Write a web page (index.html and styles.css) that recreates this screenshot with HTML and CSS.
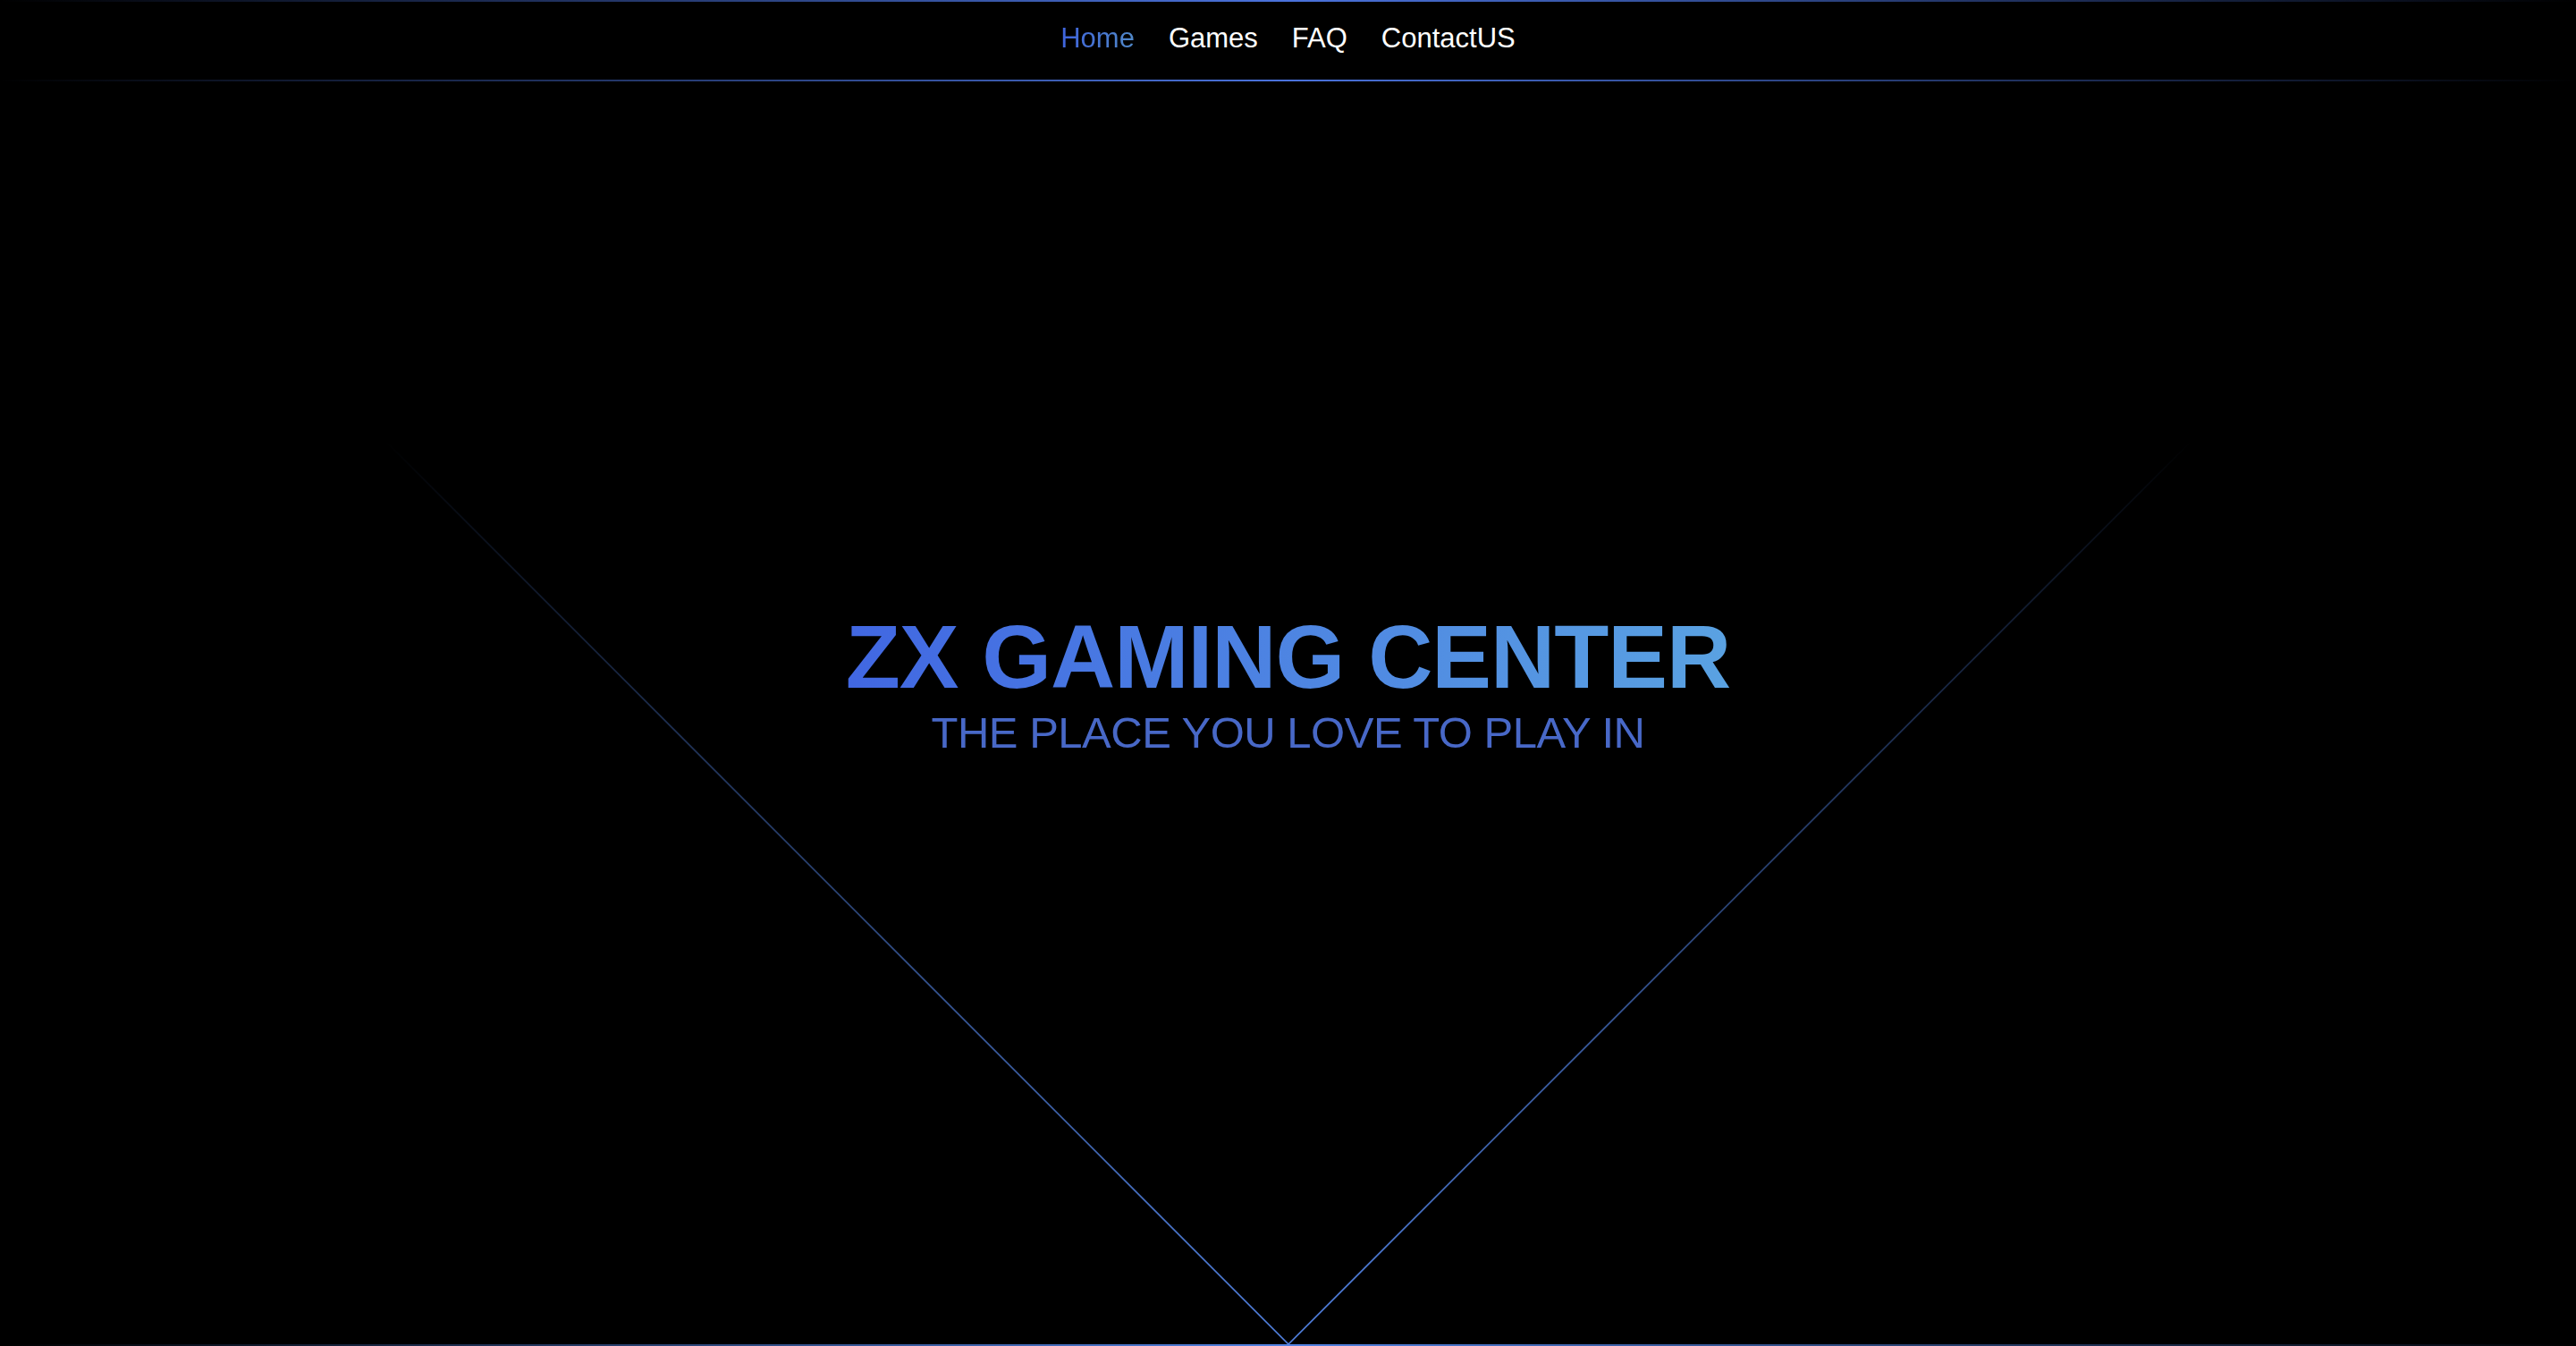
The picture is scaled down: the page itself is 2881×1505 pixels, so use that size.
FILE: index.html
```html
<!DOCTYPE html>
<html lang="en">
<head>
<meta charset="utf-8">
<title>ZX Gaming Center</title>
<link rel="stylesheet" href="styles.css">
</head>
<body>
<div class="page">
  <header class="top">
    <nav class="nav">
      <a class="nav-link active" href="#home">Home</a>
      <a class="nav-link" href="#games">Games</a>
      <a class="nav-link" href="#faq">FAQ</a>
      <a class="nav-link" href="#contact">ContactUS</a>
    </nav>
    <section class="hero" id="home">
      <svg class="vee" width="2020" height="1010" viewBox="0 0 2020 1010" aria-hidden="true">
        <defs>
          <linearGradient id="veeFade" gradientUnits="userSpaceOnUse" x1="0" y1="0" x2="0" y2="1010">
            <stop offset="0" stop-color="#5282e2" stop-opacity="0"/>
            <stop offset="0.3" stop-color="#5282e2" stop-opacity="0.35"/>
            <stop offset="1" stop-color="#5282e2" stop-opacity="1"/>
          </linearGradient>
        </defs>
        <path d="M0 0 L1010 1010 L2020 0" fill="none" stroke="url(#veeFade)" stroke-width="1.6"/>
      </svg>
      <h1 class="title">ZX GAMING CENTER</h1>
      <p class="subtitle">THE PLACE YOU LOVE TO PLAY IN</p>
    </section>
  </header>
  <section class="games" id="games"></section>
  <section class="faq" id="faq"></section>
  <section class="contact" id="contact"></section>
</div>
</body>
</html>
```

FILE: styles.css
```css
html, body {
  margin: 0;
  padding: 0;
  height: 100%;
  overflow: hidden;
  background: #000;
  color: #fff;
  font-family: "Liberation Sans", Arial, sans-serif;
}

.page {
  height: 100vh;
  overflow-y: auto;
  overflow-x: hidden;
}

.page::-webkit-scrollbar {
  width: 8px;
  background: #000;
}
.page::-webkit-scrollbar-track {
  background: #000;
}
.page::-webkit-scrollbar-thumb {
  background: #222;
  border-radius: 4px;
}

.top {
  min-height: 100vh;
  display: flex;
  flex-direction: column;
  box-sizing: border-box;
}

.nav {
  display: flex;
  justify-content: center;
  gap: 38px;
  padding: 23px 0 28px;
  border-top: 2px solid transparent;
  border-bottom: 2px solid transparent;
  border-image: linear-gradient(to right, rgba(74,114,220,0) 0%, #4a72dc 50%, rgba(74,114,220,0) 100%) 1;
}

.nav-link {
  font-size: 31px;
  line-height: 36px;
  color: #fff;
  text-decoration: none;
}

.nav-link.active {
  background: linear-gradient(to right, #3e63dc, #5088c8);
  -webkit-background-clip: text;
  background-clip: text;
  color: transparent;
}

.hero {
  flex: 1;
  position: relative;
  display: flex;
  flex-direction: column;
  align-items: center;
  justify-content: center;
  padding-bottom: 66px;
  border-bottom: 2px solid transparent;
  border-image: linear-gradient(to right, rgba(82,130,226,0) 0%, #5282e2 50%, rgba(82,130,226,0) 100%) 1;
}

.vee {
  position: absolute;
  left: calc(50% - 1010px);
  bottom: 0;
  pointer-events: none;
}

.title {
  position: relative;
  margin: 0;
  font-size: 100px;
  line-height: 100px;
  font-weight: 700;
  letter-spacing: -1px;
  background: linear-gradient(to right, #4167e2, #5aa2e2);
  -webkit-background-clip: text;
  background-clip: text;
  color: transparent;
}

.subtitle {
  position: relative;
  margin: 11px 0 0;
  font-size: 49px;
  line-height: 49px;
  letter-spacing: -0.5px;
  color: #4868c7;
}

.games {
  min-height: 1505px;
}

.faq {
  min-height: 700px;
}

.contact {
  min-height: 306px;
}
```
